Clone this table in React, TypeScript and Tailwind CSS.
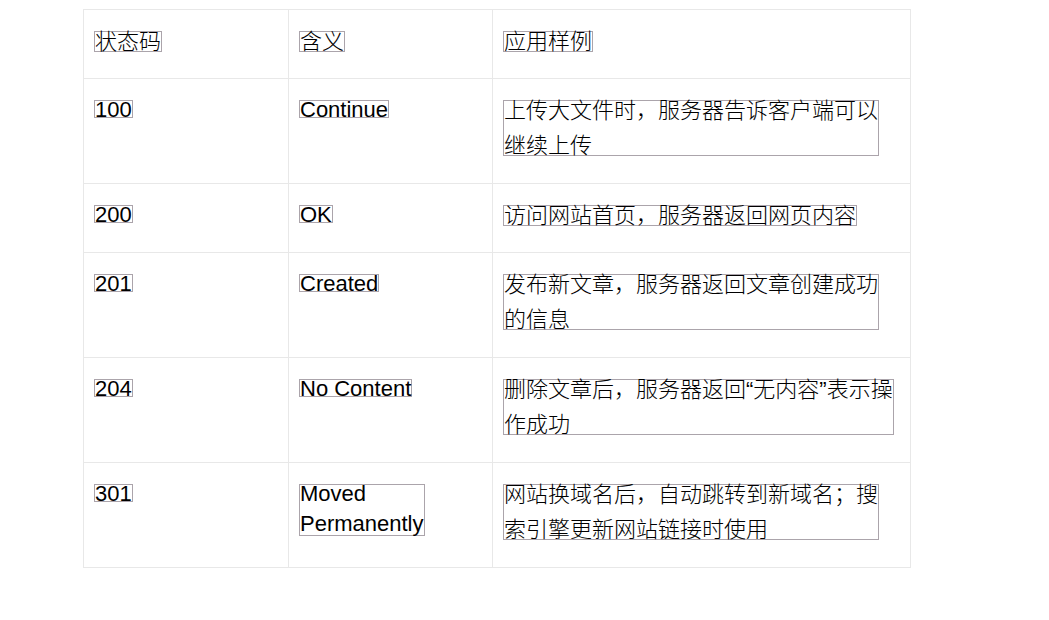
import React from "react";

type BoxProps = { lines: string[]; h: number; lh: number; mt: number; zh: boolean };

function Box({ lines, h, lh, mt, zh }: BoxProps) {
  return (
    <span
      className="inline-block border border-[#aba4ab] overflow-visible whitespace-nowrap align-top"
      style={{ height: h }}
    >
      <span
        className={zh ? "block font-light" : "block"}
        style={{ lineHeight: `${lh}px`, marginTop: mt }}
      >
        {lines.map((l, i) => (
          <span key={i} className="block">
            {l}
          </span>
        ))}
      </span>
    </span>
  );
}

type Row = {
  h: string;
  c: [string[], string[], string[]];
};

const rows: Row[] = [
  { h: "h-[69px]", c: [["状态码"], ["含义"], ["应用样例"]] },
  {
    h: "h-[105px]",
    c: [["100"], ["Continue"], ["上传大文件时，服务器告诉客户端可以", "继续上传"]],
  },
  { h: "h-[69px]", c: [["200"], ["OK"], ["访问网站首页，服务器返回网页内容"]] },
  {
    h: "h-[105px]",
    c: [["201"], ["Created"], ["发布新文章，服务器返回文章创建成功", "的信息"]],
  },
  {
    h: "h-[105px]",
    c: [["204"], ["No Content"], ["删除文章后，服务器返回“无内容”表示操", "作成功"]],
  },
  {
    h: "h-[105px]",
    c: [["301"], ["Moved", "Permanently"], ["网站换域名后，自动跳转到新域名；搜", "索引擎更新网站链接时使用"]],
  },
];

function isZh(s: string) {
  return /[\u4e00-\u9fff]/.test(s);
}

function Cell({ lines }: { lines: string[] }) {
  const zh = isZh(lines[0]);
  let p;
  if (zh) {
    if (lines.length === 1) p = { h: 21, lh: 33, mt: -7 };
    else p = { h: 56, lh: 35, mt: -8 };
  } else {
    if (lines.length === 1) p = { h: 18, lh: 30, mt: -6 };
    else p = { h: 52, lh: 30, mt: -6 };
  }
  return <Box lines={lines} zh={zh} {...p} />;
}

export default function App() {
  const widths = ["w-[205px]", "w-[204px]", "w-[418px]"];
  return (
    <div
      className="w-[1049px] h-[620px] bg-white text-black text-[22px] pt-[9px] pl-[83px]"
      style={{ fontFamily: '"Liberation Sans", "Noto Sans CJK SC", sans-serif' }}
    >
      <div className="w-[828px] border-l border-t border-[#e8e8e8] flex flex-col">
        {rows.map((r, i) => (
          <div key={i} className={`flex ${r.h}`}>
            {r.c.map((lines, j) => (
              <div
                key={j}
                className={`${widths[j]} shrink-0 border-r border-b border-[#e8e8e8] pt-[21px] pl-[10px]`}
              >
                <Cell lines={lines} />
              </div>
            ))}
          </div>
        ))}
      </div>
    </div>
  );
}
